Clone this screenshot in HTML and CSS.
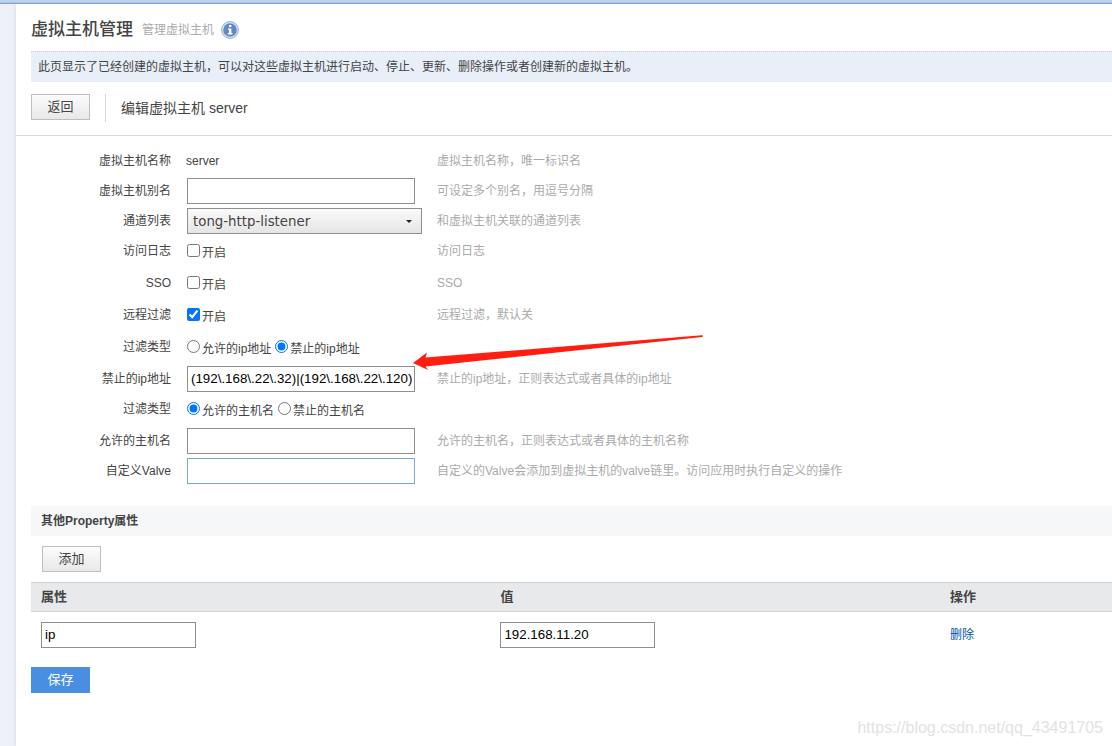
FILE: index.html
```html
<!DOCTYPE html>
<html lang="zh-CN">
<head>
<meta charset="utf-8">
<title>虚拟主机管理</title>
<link rel="stylesheet" href="styles.css">
</head>
<body>
<div class="topbar"></div>
<main class="page">
  <header class="page-head">
    <h1 class="page-title">虚拟主机管理</h1>
    <span class="page-subtitle">管理虚拟主机</span>
    <svg class="info-icon" viewBox="0 0 18 18" aria-hidden="true">
      <circle cx="9" cy="9" r="8.4" fill="#dfe7f3" stroke="#92abd3" stroke-width="1"/>
      <circle cx="9" cy="9" r="6.8" fill="#6488c2"/>
      <path d="M8 4h2.4v2H8zM7 7.400h3.400v4.600h1v1.400H6.800V12H8V8.800H7z" fill="#fff"/>
    </svg>
  </header>
  <p class="notice">此页显示了已经创建的虚拟主机，可以对这些虚拟主机进行启动、停止、更新、删除操作或者创建新的虚拟主机。</p>
  <div class="toolbar">
    <button class="btn" type="button">返回</button>
    <h2 class="toolbar-title">编辑虚拟主机 server</h2>
  </div>
  <form class="form">
    <div class="row"><span class="label">虚拟主机名称</span><span class="value">server</span><span class="hint">虚拟主机名称，唯一标识名</span></div>
    <div class="row"><label class="label" for="alias">虚拟主机别名</label><div class="field"><input class="text" id="alias" type="text"></div><span class="hint">可设定多个别名，用逗号分隔</span></div>
    <div class="row"><label class="label" for="channel">通道列表</label><div class="field select-wrap"><select class="select" id="channel"><option>tong-http-listener</option></select></div><span class="hint">和虚拟主机关联的通道列表</span></div>
    <div class="row tall"><span class="label">访问日志</span><div class="field options"><label class="option"><input type="checkbox">开启</label></div><span class="hint">访问日志</span></div>
    <div class="row tall"><span class="label">SSO</span><div class="field options"><label class="option"><input type="checkbox">开启</label></div><span class="hint">SSO</span></div>
    <div class="row tall"><span class="label">远程过滤</span><div class="field options"><label class="option"><input type="checkbox" checked>开启</label></div><span class="hint">远程过滤，默认关</span></div>
    <div class="row tall"><span class="label">过滤类型</span><div class="field options"><label class="option"><input type="radio" name="iptype">允许的ip地址</label><label class="option"><input type="radio" name="iptype" checked>禁止的ip地址</label></div></div>
    <div class="row"><label class="label" for="denyip">禁止的ip地址</label><div class="field"><input class="text" id="denyip" type="text" value="(192\.168\.22\.32)|(192\.168\.22\.120)"></div><span class="hint">禁止的ip地址，正则表达式或者具体的ip地址</span>
      <svg class="arrow" viewBox="0 0 292 38" aria-hidden="true"><path d="M1 28L15 17.500L13.500 22.500L290 0.300Q292 1 290 2L13.500 31.500L16 35Z" fill="#ff1e10"/></svg>
    </div>
    <div class="row tall"><span class="label">过滤类型</span><div class="field options"><label class="option"><input type="radio" name="hosttype" checked>允许的主机名</label><label class="option"><input type="radio" name="hosttype">禁止的主机名</label></div></div>
    <div class="row"><label class="label" for="allowhost">允许的主机名</label><div class="field"><input class="text" id="allowhost" type="text"></div><span class="hint">允许的主机名，正则表达式或者具体的主机名称</span></div>
    <div class="row"><label class="label" for="valve">自定义Valve</label><div class="field"><input class="text active" id="valve" type="text"></div><span class="hint">自定义的Valve会添加到虚拟主机的valve链里。访问应用时执行自定义的操作</span></div>
  </form>
  <section class="props">
    <h3 class="props-title">其他Property属性</h3>
    <div class="props-tools"><button class="btn" type="button">添加</button></div>
    <table class="table">
      <thead><tr><th class="col-name">属性</th><th class="col-value">值</th><th>操作</th></tr></thead>
      <tbody><tr>
        <td><input class="text small" type="text" value="ip" aria-label="属性"></td>
        <td><input class="text small" type="text" value="192.168.11.20" aria-label="值"></td>
        <td><a class="link" href="#">删除</a></td>
      </tr></tbody>
    </table>
    <button class="btn primary" type="button">保存</button>
  </section>
</main>
<div class="watermark">https://blog.csdn.net/qq_43491705</div>
</body>
</html>
```
FILE: styles.css
```css
* {
  box-sizing: border-box;
}

body {
  margin: 0;
  min-height: 100vh;
  display: flex;
  flex-direction: column;
  position: relative;
  background: #edf1f7;
  color: #444;
  font: 12px/30px "Liberation Sans", "Noto Sans CJK SC", sans-serif;
}

.topbar {
  height: 4px;
  background: linear-gradient(#c0d1e9 0 2px, #a9c5e9 2px 3px, #7fa3d4 3px);
}

.page {
  flex: 1;
  margin-left: 16px;
  padding-left: 15px;
  background: #fff;
  box-shadow: -1px 0 3px #d9dfe9;
  clip-path: inset(0 0 0 -8px);
}

.page-head {
  display: flex;
  align-items: center;
  height: 47px;
  padding-top: 4px;
}

.page-title {
  margin: 0;
  font-size: 17px;
  font-weight: 500;
}

.page-subtitle {
  margin-left: 9px;
  color: #aaa;
}

.info-icon {
  width: 18px;
  height: 18px;
  margin-left: 7px;
}

.notice {
  margin: 0;
  padding-left: 7px;
  border-top: 1px dotted #ccc;
  background: #e8eff8;
}

.toolbar {
  display: flex;
  margin-left: -15px;
  padding: 12px 0 13px 15px;
  border-bottom: 1px solid #d8d8d8;
}

.toolbar-title {
  margin: 0 0 0 15px;
  padding-left: 15px;
  border-left: 1px solid #d8d8d8;
  font-size: 14px;
  font-weight: 400;
  line-height: 28px;
}

.btn {
  width: 59px;
  height: 26px;
  padding: 0;
  border: 1px solid #bfbfbf;
  background: linear-gradient(#fcfcfc, #e8e8e8);
  color: #444;
  font: inherit;
  font-size: 13px;
  line-height: 24px;
}

.form {
  padding-top: 10px;
}

.row {
  display: flex;
  position: relative;
  min-height: 30px;
}

.tall {
  min-height: 32px;
}

.label {
  width: 140px;
  text-align: right;
}

.field {
  width: 251px;
  padding: 2px 0 0 1px;
  margin-left: 15px;
  display: flex;
  align-items: flex-start;
}

.value {
  width: 251px;
  margin-left: 15px;
}

.hint {
  color: #aaa;
}

.text {
  width: 228px;
  height: 26px;
  padding: 0 0 1px 3px;
  border: 1px solid #8f8f8f;
  background: #fff;
  color: #000;
  font-family: "Liberation Sans", "Noto Sans CJK SC", sans-serif;
}

.active {
  border-color: #7ba7dc;
}

.small {
  width: 155px;
}

.select-wrap {
  position: relative;
}

.select {
  width: 235px;
  height: 26px;
  padding: 0 5px;
  appearance: none;
  border: 1px solid #8f8f8f;
  border-radius: 0;
  background: linear-gradient(#fafafa, #e5e5e5);
  color: #444;
  font-family: "DejaVu Sans", sans-serif;
}

.select-wrap::after {
  content: "";
  position: absolute;
  top: 14px;
  right: 25px;
  border: 3px solid transparent;
  border-top-color: #222;
  border-bottom: 0;
}

.options {
  gap: 4px;
}

.option {
  display: flex;
  align-items: flex-start;
  white-space: nowrap;
}

.option input {
  width: 13px;
  height: 13px;
  margin: 6px 2px 0 0;
}

.arrow {
  position: absolute;
  left: 381px;
  top: -29px;
  width: 292px;
  height: 38px;
}

.props {
  padding-top: 20px;
}

.props-title {
  margin: 0;
  padding-left: 10px;
  background: #f5f7f9;
  font-size: 12px;
  font-weight: 700;
}

.props-tools {
  display: flex;
  padding: 10px 11px;
}

.table {
  width: 100%;
  border-collapse: collapse;
  table-layout: fixed;
}

.table th {
  padding: 0 10px;
  border: solid #d0d2d4;
  border-width: 1px 0;
  background: #e8e9eb;
  font-size: 13px;
  line-height: 28px;
  text-align: left;
}

.table td {
  padding: 10px;
  line-height: 26px;
}

.table .text {
  display: block;
}

.col-name {
  width: 42.5%;
}

.col-value {
  width: 41.6%;
}

.link {
  color: #0055a5;
  text-decoration: none;
}

.primary {
  display: block;
  margin-top: 9px;
  border-color: #488fe2;
  background: #488fe2;
  color: #fff;
}

.watermark {
  position: absolute;
  right: 9px;
  bottom: 3px;
  color: #e2e2e2;
  font-size: 16px;
}
```
